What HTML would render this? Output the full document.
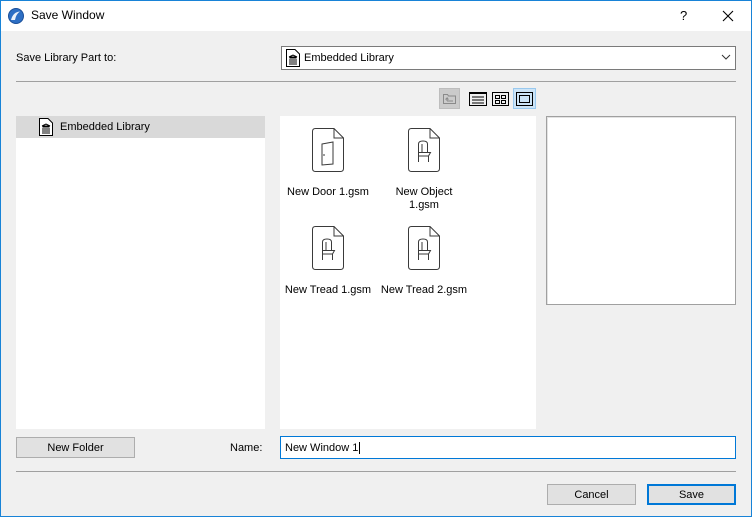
<!DOCTYPE html>
<html><head><style>
*{margin:0;padding:0;box-sizing:border-box}
body{width:752px;height:517px;background:#f0f0f0;font-family:"Liberation Sans",sans-serif;font-size:11px;color:#000;position:relative;overflow:hidden}
.a{position:absolute}
.frame{left:0;top:0;width:752px;height:517px;border:1px solid #1883d7;z-index:10;pointer-events:none}
.lbl{white-space:nowrap;line-height:13px}
.btn{background:#e1e1e1;border:1px solid #adadad;text-align:center;line-height:21px}
.ctr{text-align:center;width:100px}
</style></head><body>
<div class="a" style="left:0;top:0;width:752px;height:31px;background:#fff"></div>
<svg class="a" style="left:8px;top:8px" width="16" height="16" viewBox="0 0 16 16"><circle cx="8" cy="8" r="7.5" fill="#2d6fc4"/><path d="M3 12 Q5 4 12 3.5 Q8 6 7 12 Z" fill="#fff" opacity=".9"/><circle cx="8" cy="8" r="7.5" fill="none" stroke="#1a4f99"/></svg>
<div class="a lbl" style="left:31px;top:9px;font-size:12px">Save Window</div>
<div class="a lbl" style="left:680px;top:9px;font-size:13px">?</div>
<svg class="a" style="left:722px;top:10px" width="12" height="12"><path d="M1 1L11 11M11 1L1 11" stroke="#000" stroke-width="1.1"/></svg>

<div class="a lbl" style="left:16px;top:52px">Save Library Part to:</div>
<div class="a" style="left:281px;top:46px;width:455px;height:24px;background:#fff;border:1px solid #7a7a7a"></div>
<svg class="a" style="left:286px;top:49px" width="14" height="18" viewBox="0 0 14 18"><path d="M.5 .5H9L13.5 5V17.5H.5Z" fill="#fff" stroke="#000"/><path d="M3 8L7 6L11 8H3M3.5 9h7M4 10v4M6 10v4M8 10v4M10 10v4M3 15h8" stroke="#000" fill="none"/></svg>
<div class="a lbl" style="left:304px;top:52px">Embedded Library</div>
<svg class="a" style="left:721px;top:54px" width="10" height="7"><path d="M1 1L5 5L9 1" stroke="#333" fill="none"/></svg>
<div class="a" style="left:16px;top:81px;width:720px;height:1px;background:#a0a0a0"></div>

<div class="a" style="left:439px;top:88px;width:21px;height:21px;background:#cbcbcb;border:1px solid #bdbdbd"></div>
<svg class="a" style="left:443px;top:93px" width="13" height="11"><path d="M.5 1.5h4l1 1.5h7v7.5h-12z" fill="none" stroke="#8a8a8a"/><path d="M4 8h6M4 8V5l-1.5 1.5M4 5l1.5 1.5" stroke="#8a8a8a" fill="none"/></svg>
<svg class="a" style="left:469px;top:92px" width="18" height="14"><rect x=".5" y=".5" width="17" height="13" fill="none" stroke="#000"/><path d="M.5 1.5h17M3 5h12M3 8h12M3 11h12" stroke="#000"/></svg>
<svg class="a" style="left:492px;top:92px" width="17" height="14"><rect x=".5" y=".5" width="16" height="13" fill="none" stroke="#000"/><rect x="3.5" y="3.5" width="4" height="3" fill="none" stroke="#000"/><rect x="9.5" y="3.5" width="4" height="3" fill="none" stroke="#000"/><rect x="3.5" y="8.5" width="4" height="3" fill="none" stroke="#000"/><rect x="9.5" y="8.5" width="4" height="3" fill="none" stroke="#000"/></svg>
<div class="a" style="left:513px;top:88px;width:23px;height:21px;background:#cce4f7;border:1px solid #99c9ef"></div>
<svg class="a" style="left:516px;top:92px" width="17" height="14"><rect x=".5" y=".5" width="16" height="13" fill="none" stroke="#000"/><rect x="3.5" y="3.5" width="10" height="7" fill="none" stroke="#000"/></svg>

<div class="a" style="left:16px;top:116px;width:249px;height:313px;background:#fff"></div>
<div class="a" style="left:16px;top:116px;width:249px;height:22px;background:#d9d9d9"></div>
<svg class="a" style="left:39px;top:118px" width="14" height="18" viewBox="0 0 14 18"><path d="M.5 .5H9L13.5 5V17.5H.5Z" fill="#fff" stroke="#000"/><path d="M3 8L7 6L11 8H3M3.5 9h7M4 10v4M6 10v4M8 10v4M10 10v4M3 15h8" stroke="#000" fill="none"/></svg>
<div class="a lbl" style="left:60px;top:121px">Embedded Library</div>

<div class="a" style="left:280px;top:116px;width:256px;height:313px;background:#fff"></div>
<svg width="0" height="0" style="position:absolute"><defs>
<g id="doc"><path d="M3.5 .5H22L31.5 10V40.5Q31.5 43.5 28.5 43.5H3.5Q.5 43.5 .5 40.5V3.5Q.5 .5 3.5 .5Z" fill="#fff" stroke="#3a3a3a"/><path d="M22 .5V10H31.5" fill="none" stroke="#3a3a3a"/></g>
<g id="chair"><path d="M10.5 34V16Q10.5 13 15 13Q19.5 13 19.5 16V24.5M10.5 24.5H22.5L20.5 28H10.5M20.5 28V34M14 16V24.5" fill="none" stroke="#3a3a3a"/></g>
</defs></svg>
<svg class="a" style="left:312px;top:128px" width="33" height="45"><use href="#doc"/><path d="M10 16L21 14V36L10 37Z" fill="none" stroke="#3a3a3a"/><path d="M12 26v2" stroke="#3a3a3a"/></svg>
<svg class="a" style="left:408px;top:128px" width="33" height="45"><use href="#doc"/><use href="#chair"/></svg>
<svg class="a" style="left:312px;top:226px" width="33" height="45"><use href="#doc"/><use href="#chair"/></svg>
<svg class="a" style="left:408px;top:226px" width="33" height="45"><use href="#doc"/><use href="#chair"/></svg>
<div class="a lbl ctr" style="left:278px;top:186px">New Door 1.gsm</div>
<div class="a lbl ctr" style="left:374px;top:186px">New Object<br>1.gsm</div>
<div class="a lbl ctr" style="left:278px;top:284px">New Tread 1.gsm</div>
<div class="a lbl ctr" style="left:374px;top:284px">New Tread 2.gsm</div>

<div class="a" style="left:546px;top:116px;width:190px;height:189px;background:#fff;border:1px solid #a0a0a0;box-shadow:inset 1px 1px 0 #e3e3e3"></div>

<div class="a btn" style="left:16px;top:437px;width:119px;height:21px">New Folder</div>
<div class="a lbl" style="left:230px;top:442px">Name:</div>
<div class="a" style="left:280px;top:436px;width:456px;height:23px;background:#fff;border:1px solid #0078d7"></div>
<div class="a lbl" style="left:285px;top:442px">New Window 1<span style="border-left:1px solid #000;margin-left:1px"></span></div>
<div class="a" style="left:16px;top:471px;width:720px;height:1px;background:#a0a0a0"></div>
<div class="a btn" style="left:547px;top:484px;width:89px;height:21px">Cancel</div>
<div class="a btn" style="left:647px;top:484px;width:89px;height:21px;border:2px solid #0078d7;line-height:19px">Save</div>
<div class="a frame"></div>
</body></html>
